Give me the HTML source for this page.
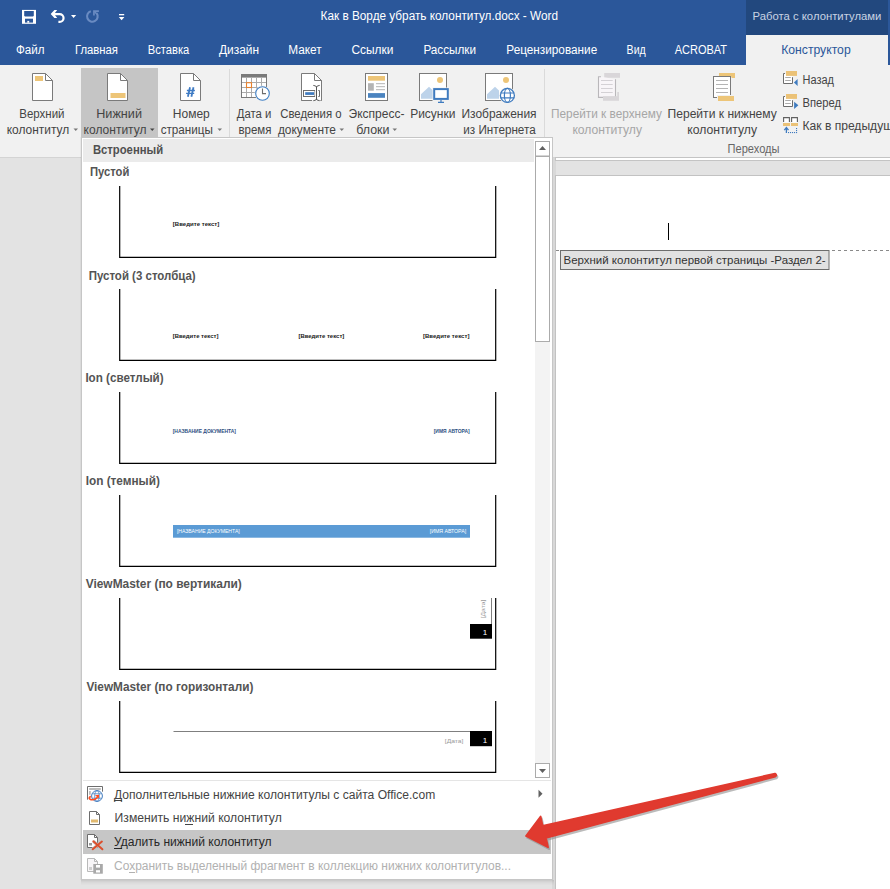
<!DOCTYPE html>
<html><head><meta charset="utf-8">
<style>
html,body{margin:0;padding:0;width:890px;height:889px;overflow:hidden;background:#E3E3E3;}
svg{position:absolute;left:0;top:0;display:block;}
text{font-family:"Liberation Sans",sans-serif;font-size:12px;white-space:pre;}
</style></head>
<body>
<svg width="890" height="889" viewBox="0 0 890 889">
<rect x="0" y="0" width="890" height="65" fill="#2B579A"/>
<rect x="746" y="0" width="142" height="35" fill="#22487E"/>
<rect x="746" y="35" width="142" height="30" fill="#F1F1F1"/>
<rect x="0" y="65" width="890" height="92" fill="#F1F1F1"/>
<rect x="0" y="157" width="890" height="1" fill="#D4D4D4"/>
<rect x="81" y="68" width="77" height="70" fill="#C5C5C5"/>
<rect x="229" y="69" width="1" height="68" fill="#DADADA"/>
<rect x="544" y="69" width="1" height="84" fill="#DADADA"/>
<path d="M73.5 128.5 h4.5 l-2.25 2.5z" fill="#777"/>
<path d="M150 128.5 h4.5 l-2.25 2.5z" fill="#444"/>
<path d="M217.5 128.5 h4.5 l-2.25 2.5z" fill="#777"/>
<path d="M339.5 128.5 h4.5 l-2.25 2.5z" fill="#777"/>
<path d="M392.5 128.5 h4.5 l-2.25 2.5z" fill="#777"/>
<text x="320.60" y="19.70" fill="#FFFFFF" style="font-size:12.00px" textLength="237.39" lengthAdjust="spacingAndGlyphs" >Как в Ворде убрать колонтитул.docx - Word</text>
<text x="752.50" y="20.00" fill="#C9D3E3" style="font-size:11.30px" textLength="128.89" lengthAdjust="spacing" >Работа с колонтитулами</text>
<text x="16.00" y="54.00" fill="#FFFFFF" style="font-size:12.00px" textLength="28.51" lengthAdjust="spacingAndGlyphs" >Файл</text>
<text x="75.00" y="54.00" fill="#FFFFFF" style="font-size:12.00px" textLength="42.99" lengthAdjust="spacingAndGlyphs" >Главная</text>
<text x="147.80" y="54.00" fill="#FFFFFF" style="font-size:12.00px" textLength="41.49" lengthAdjust="spacingAndGlyphs" >Вставка</text>
<text x="219.00" y="54.00" fill="#FFFFFF" style="font-size:12.00px" textLength="39.99" lengthAdjust="spacingAndGlyphs" >Дизайн</text>
<text x="288.30" y="54.00" fill="#FFFFFF" style="font-size:12.00px" textLength="33.40" lengthAdjust="spacingAndGlyphs" >Макет</text>
<text x="351.40" y="54.00" fill="#FFFFFF" style="font-size:12.00px" textLength="41.91" lengthAdjust="spacingAndGlyphs" >Ссылки</text>
<text x="423.40" y="54.00" fill="#FFFFFF" style="font-size:12.00px" textLength="52.61" lengthAdjust="spacingAndGlyphs" >Рассылки</text>
<text x="506.30" y="54.00" fill="#FFFFFF" style="font-size:12.00px" textLength="90.89" lengthAdjust="spacingAndGlyphs" >Рецензирование</text>
<text x="626.60" y="54.00" fill="#FFFFFF" style="font-size:12.00px" textLength="19.09" lengthAdjust="spacingAndGlyphs" >Вид</text>
<text x="674.70" y="54.00" fill="#FFFFFF" style="font-size:12.00px" textLength="52.30" lengthAdjust="spacingAndGlyphs" >ACROBAT</text>
<text x="781.20" y="54.00" fill="#2B579A" style="font-size:12.00px" textLength="69.49" lengthAdjust="spacingAndGlyphs" >Конструктор</text>
<text x="19.30" y="118.00" fill="#444444" style="font-size:12.00px" textLength="45.20" lengthAdjust="spacingAndGlyphs" >Верхний</text>
<text x="6.70" y="134.00" fill="#444444" style="font-size:12.00px" textLength="62.51" lengthAdjust="spacingAndGlyphs" >колонтитул</text>
<text x="96.20" y="118.00" fill="#444444" style="font-size:12.00px" textLength="45.79" lengthAdjust="spacingAndGlyphs" >Нижний</text>
<text x="83.60" y="134.00" fill="#444444" style="font-size:12.00px" textLength="62.91" lengthAdjust="spacingAndGlyphs" >колонтитул</text>
<text x="172.80" y="118.00" fill="#444444" style="font-size:12.00px" textLength="37.01" lengthAdjust="spacingAndGlyphs" >Номер</text>
<text x="160.70" y="134.00" fill="#444444" style="font-size:12.00px" textLength="52.20" lengthAdjust="spacingAndGlyphs" >страницы</text>
<text x="236.80" y="118.00" fill="#444444" style="font-size:12.00px" textLength="34.61" lengthAdjust="spacingAndGlyphs" >Дата и</text>
<text x="238.40" y="134.00" fill="#444444" style="font-size:12.00px" textLength="33.00" lengthAdjust="spacingAndGlyphs" >время</text>
<text x="280.20" y="118.00" fill="#444444" style="font-size:12.00px" textLength="61.40" lengthAdjust="spacingAndGlyphs" >Сведения о</text>
<text x="277.90" y="134.00" fill="#444444" style="font-size:12.00px" textLength="58.11" lengthAdjust="spacingAndGlyphs" >документе</text>
<text x="348.60" y="118.00" fill="#444444" style="font-size:12.00px" textLength="55.89" lengthAdjust="spacingAndGlyphs" >Экспресс-</text>
<text x="356.20" y="134.00" fill="#444444" style="font-size:12.00px" textLength="33.30" lengthAdjust="spacingAndGlyphs" >блоки</text>
<text x="410.20" y="118.00" fill="#444444" style="font-size:12.00px" textLength="45.19" lengthAdjust="spacingAndGlyphs" >Рисунки</text>
<text x="461.50" y="118.00" fill="#444444" style="font-size:12.00px" textLength="75.10" lengthAdjust="spacingAndGlyphs" >Изображения</text>
<text x="463.30" y="134.00" fill="#444444" style="font-size:12.00px" textLength="72.38" lengthAdjust="spacingAndGlyphs" >из Интернета</text>
<text x="551.00" y="118.00" fill="#A6A6A6" style="font-size:12.00px" textLength="110.89" lengthAdjust="spacingAndGlyphs" >Перейти к верхнему</text>
<text x="572.40" y="134.00" fill="#A6A6A6" style="font-size:12.00px" textLength="69.61" lengthAdjust="spacingAndGlyphs" >колонтитулу</text>
<text x="667.50" y="118.00" fill="#444444" style="font-size:12.00px" textLength="109.30" lengthAdjust="spacingAndGlyphs" >Перейти к нижнему</text>
<text x="687.20" y="134.00" fill="#444444" style="font-size:12.00px" textLength="69.81" lengthAdjust="spacingAndGlyphs" >колонтитулу</text>
<text x="727.60" y="152.70" fill="#666666" style="font-size:12.00px" textLength="51.91" lengthAdjust="spacingAndGlyphs" >Переходы</text>
<text x="802.50" y="84.00" fill="#444444" style="font-size:12.00px" textLength="31.40" lengthAdjust="spacingAndGlyphs" >Назад</text>
<text x="802.50" y="107.00" fill="#444444" style="font-size:12.00px" textLength="38.51" lengthAdjust="spacingAndGlyphs" >Вперед</text>
<text x="802.50" y="130.00" fill="#444444" style="font-size:12.00px" textLength="105.51" lengthAdjust="spacingAndGlyphs" >Как в предыдущем</text>
<!-- ===== DOCUMENT AREA ===== -->
<rect x="0" y="158" width="890" height="731" fill="#E3E3E3"/>
<rect x="552" y="158" width="4" height="731" fill="#D8D8D8"/>
<rect x="555.5" y="157.5" width="340" height="3" fill="#FFFFFF" stroke="#C4C4C4" stroke-width="1"/>
<rect x="555.5" y="175.5" width="340" height="720" fill="#FFFFFF" stroke="#C2C2C2" stroke-width="1"/>
<path d="M556 250.5 H890" stroke="#8A8A8A" stroke-width="1" stroke-dasharray="3 3"/>
<rect x="560.5" y="250.5" width="268.5" height="19" fill="#E1E1E1" stroke="#6D6D6D" stroke-width="1"/>
<rect x="668" y="223" width="1" height="17" fill="#000000"/>
<text x="563.50" y="264.00" fill="#333333" style="font-size:11.50px" textLength="262.19" lengthAdjust="spacingAndGlyphs" >Верхний колонтитул первой страницы -Раздел 2-</text>
<!-- ===== QAT icons ===== -->
<rect x="22" y="9.9" width="14" height="13.9" fill="#FFFFFF"/>
<path d="M24.2 11.1 H33.8 V15.8 L33 16.6 H25 L24.2 15.8z" fill="#2B579A"/>
<rect x="25" y="18.7" width="8" height="3.9" fill="#2B579A"/>
<rect x="27.3" y="20.9" width="1.9" height="1.8" fill="#FFFFFF"/>
<path d="M50.7 14 L54.4 10.1 H57.2 L54.2 14 L57.2 17.9 H54.4z" fill="#FFFFFF"/>
<path d="M54 14.05 H59.6 A3.95 3.95 0 0 1 59.6 21.95 H58.4" fill="none" stroke="#FFFFFF" stroke-width="2.2"/>
<path d="M71 15 h5.2 l-2.6 3z" fill="#FFFFFF"/>
<path d="M90.8 11.3 A5.3 5.3 0 1 0 96.6 13.2" fill="none" stroke="#6A8BC2" stroke-width="2.1"/>
<path d="M93.95 15.6 V11.1 H98.9" fill="none" stroke="#6A8BC2" stroke-width="1.7"/>
<path d="M94.2 11.3 L96.8 14" fill="none" stroke="#6A8BC2" stroke-width="1.6"/>
<rect x="119" y="14" width="5.2" height="1.3" fill="#FFFFFF"/>
<path d="M118.8 17 h5.6 l-2.8 3.2z" fill="#FFFFFF"/>

<!-- ===== Ribbon icons ===== -->
<defs>
<path id="pg" d="M32.5 73.5 H45.5 L52.5 80.5 V100.5 H32.5 Z"/>
</defs>
<!-- Верхний -->
<path d="M32.5 73.5 H45.5 L52.5 80.5 V100.5 H32.5 Z" fill="#FFFFFF" stroke="#7A7A7A"/>
<path d="M45.5 73.5 V80.5 H52.5" fill="none" stroke="#7A7A7A"/>
<rect x="35" y="76" width="8" height="5" fill="#EDC578"/>
<!-- Нижний -->
<path d="M107.5 73.5 H120.5 L127.5 80.5 V100.5 H107.5 Z" fill="#FFFFFF" stroke="#7A7A7A"/>
<path d="M120.5 73.5 V80.5 H127.5" fill="none" stroke="#7A7A7A"/>
<rect x="110.5" y="93" width="15" height="5" fill="#EDC578"/>
<!-- Номер -->
<path d="M180.5 73.5 H193.5 L200.5 80.5 V100.5 H180.5 Z" fill="#FFFFFF" stroke="#7A7A7A"/>
<path d="M193.5 73.5 V80.5 H200.5" fill="none" stroke="#7A7A7A"/>
<path d="M190 87.2 L187.9 96.8 M193.5 87.2 L191.4 96.8" stroke="#3F7BC4" stroke-width="1.8"/>
<path d="M186.9 90.5 H194.9 M186.1 93.4 H194.2" stroke="#3F7BC4" stroke-width="1.4"/>
<!-- Дата и время -->
<rect x="241.5" y="74.5" width="25" height="23" fill="#FFFFFF" stroke="#7A7A7A"/>
<rect x="241" y="74" width="26" height="3.6" fill="#7A7A7A"/>
<g stroke="#ABABAB" stroke-width="1">
<path d="M246.5 77.5 V97 M251.5 77.5 V97 M256.5 77.5 V97 M261.5 77.5 V97 M242 82.5 H266 M242 87.5 H266 M242 92.5 H266"/>
</g>
<rect x="246.5" y="82.7" width="5" height="4.8" fill="#FFFFFF" stroke="#E8822E" stroke-width="1.1"/>
<circle cx="262.5" cy="93.5" r="7.4" fill="#FFFFFF" stroke="#F1F1F1" stroke-width="1"/>
<circle cx="262.5" cy="93.5" r="6.8" fill="#FFFFFF" stroke="#3F7FC4" stroke-width="1.1"/>
<path d="M262.5 88.5 V93.6 H266" fill="none" stroke="#6D6D6D" stroke-width="1.1"/>
<!-- Сведения о документе -->
<path d="M301.5 73.5 H314.5 L321.5 80.5 V100.5 H301.5 Z" fill="#FFFFFF" stroke="#7A7A7A"/>
<path d="M314.5 73.5 V80.5 H321.5" fill="none" stroke="#7A7A7A"/>
<rect x="303.5" y="90.5" width="11.5" height="6" fill="#FFFFFF" stroke="#6D6D6D"/>
<rect x="305.2" y="92.2" width="8.8" height="2.7" fill="#3F7BBF"/>
<rect x="315.2" y="84" width="2.6" height="18" fill="#FFFFFF"/>
<rect x="311.8" y="99.8" width="8.6" height="2.5" fill="#F1F1F1"/>
<rect x="311.8" y="99.5" width="8.6" height="0.6" fill="#FFFFFF"/>
<path d="M311.8 100.5 H301.5" stroke="#7A7A7A"/>
<path d="M316.5 86.5 V99.8" stroke="#555555" stroke-width="1"/>
<path d="M313.3 85.4 Q316.5 85.6 316.5 87.3 Q316.5 85.6 319.7 85.4" fill="none" stroke="#555555" stroke-width="0.95"/>
<path d="M313.3 100.7 Q316.5 100.5 316.5 98.8 Q316.5 100.5 319.7 100.7" fill="none" stroke="#555555" stroke-width="0.95"/>
<path d="M318.3 90.5 H319.5 V96.5 H318.3" fill="none" stroke="#6D6D6D"/>
<path d="M321.5 80.5 V100.5" stroke="#7A7A7A"/>
<!-- Экспресс-блоки -->
<rect x="365.5" y="73.5" width="22" height="27" fill="#FFFFFF" stroke="#7A7A7A"/>
<rect x="368" y="76" width="17" height="4.7" fill="#EDC578"/>
<rect x="368" y="83.2" width="5.8" height="7.5" fill="#B4B4B4"/>
<path d="M376 83.7 H385 M376 86.7 H385 M376 89.7 H385" stroke="#ABABAB" stroke-width="0.9"/>
<rect x="368" y="93.1" width="17" height="4.7" fill="#4A83BF"/>
<!-- Рисунки -->
<rect x="419.5" y="73.5" width="27" height="27" fill="#FFFFFF" stroke="#7A7A7A"/>
<circle cx="440" cy="80" r="3" fill="#EDC578"/>
<path d="M421 98.8 V94.2 L429 86.8 L433 90.4 V98.8z" fill="#BDD3EA"/>
<rect x="432.5" y="87.5" width="17" height="16" fill="#F1F1F1"/>
<rect x="434.2" y="89.1" width="13.6" height="9.8" fill="#FFFFFF" stroke="#3F7BBF" stroke-width="2"/>
<path d="M438 102.3 h6 M441 100 v2" stroke="#3F7BBF" stroke-width="1.2"/>
<!-- Изображения из Интернета -->
<rect x="485.5" y="73.5" width="27" height="27" fill="#FFFFFF" stroke="#7A7A7A"/>
<circle cx="506" cy="80" r="3" fill="#EDC578"/>
<path d="M487 98.8 V94.2 L495 86.8 L499 90.4 V98.8z" fill="#BDD3EA"/>
<circle cx="507.4" cy="95.4" r="8.2" fill="#F1F1F1"/>
<circle cx="507.4" cy="95.4" r="7" fill="#FFFFFF" stroke="#3F7BBF" stroke-width="1.3"/>
<ellipse cx="507.4" cy="95.4" rx="3" ry="7" fill="none" stroke="#3F7BBF" stroke-width="1.2"/>
<path d="M500.5 93 H514.3 M500.5 97.8 H514.3" stroke="#3F7BBF" stroke-width="1.2"/>
<!-- Перейти к верхнему (disabled) -->
<rect x="604.2" y="73" width="15.8" height="4.8" fill="#D9D6D9"/>
<path d="M601 76.8 H598.5 V97.4 H615.5 V79.2" fill="#F8F5F8" stroke="#B9B7BA" stroke-width="1.1"/>
<path d="M601 80.5 H612.7 M601 84.5 H612.7 M601 88.5 H612.7 M601 92.5 H612.7" stroke="#CFCDD0" stroke-width="0.9"/>
<rect x="603" y="96.2" width="16" height="4.6" fill="#D9D6D9"/>
<rect x="617.5" y="96" width="1.5" height="-0" fill="#D9D6D9"/>
<rect x="617.2" y="92" width="1.8" height="5" fill="#D9D6D9"/>
<!-- Перейти к нижнему -->
<rect x="719" y="73" width="16" height="3.8" fill="#EDC578"/>
<rect x="731.5" y="73" width="3.5" height="5" fill="#EDC578"/>
<rect x="713.5" y="76.5" width="17" height="21" fill="#FFFFFF" stroke="#7A7A7A"/>
<path d="M716 80.5 H728 M716 84.5 H728 M716 88.5 H728 M716 92.5 H728" stroke="#ABABAB" stroke-width="0.9"/>
<rect x="717" y="95" width="18" height="7" fill="#F1F1F1"/>
<rect x="718" y="96" width="16" height="5" fill="#EDC578"/>
<!-- Назад -->
<rect x="784" y="74" width="8.5" height="9.5" fill="#FFFFFF"/>
<path d="M785 73.5 H783.5 V83.5 H792.5 V77.2" fill="none" stroke="#6D6D6D"/>
<path d="M785.2 77.5 H790.8 M785.2 80.5 H790.8" stroke="#ABABAB" stroke-width="1"/>
<rect x="786" y="71" width="11" height="4.9" fill="#EBC277"/>
<path d="M797.6 79 V85.9 L793.9 82.5z" fill="#3F7BBF"/>
<!-- Вперед -->
<rect x="784" y="97" width="8.5" height="9.5" fill="#FFFFFF"/>
<path d="M785 96.5 H783.5 V106.5 H792.5 V100.2" fill="none" stroke="#6D6D6D"/>
<path d="M785.2 100.5 H790.8 M785.2 103.5 H790.8" stroke="#ABABAB" stroke-width="1"/>
<rect x="786" y="94" width="11" height="4.9" fill="#EBC277"/>
<path d="M794.1 101.8 V108.9 L798.4 105.3z" fill="#3F7BBF"/>
<!-- Как в предыдущем -->
<rect x="783.5" y="117.5" width="6" height="5" fill="#FFFFFF"/>
<rect x="791.5" y="117.5" width="6" height="5" fill="#FFFFFF"/>
<path d="M783.6 122 V117.6 H789.4 V122 M791.6 122 V117.6 H797.4 V122" fill="none" stroke="#606060" stroke-width="1.1"/>
<rect x="783" y="123" width="7" height="3" fill="#EBC277"/>
<rect x="791" y="123" width="7" height="3" fill="#EBC277"/>
<path d="M786.4 133 V127.8 M784.3 130.1 L786.4 127.6 L788.5 130.1" fill="none" stroke="#3F7BBF" stroke-width="1.3"/>
<g fill="#3F7BBF"><rect x="788" y="132" width="1.1" height="1.1"/><rect x="790" y="132" width="1.1" height="1.1"/><rect x="792" y="132" width="1.1" height="1.1"/><rect x="794" y="132" width="1.1" height="1.1"/><rect x="796" y="132" width="1.1" height="1.1"/><rect x="796" y="130" width="1.1" height="1.1"/><rect x="796" y="128" width="1.1" height="1.1"/></g>
<!-- ===== MENU ===== -->
<rect x="80" y="137" width="1" height="743" fill="#000000" opacity="0.04"/>
<rect x="81" y="880" width="473" height="1" fill="#000000" opacity="0.10"/>
<rect x="81" y="881" width="473" height="1" fill="#000000" opacity="0.07"/>
<rect x="81" y="882" width="473" height="1" fill="#000000" opacity="0.045"/>
<rect x="81" y="883" width="473" height="1" fill="#000000" opacity="0.025"/>
<rect x="81" y="884" width="473" height="1" fill="#000000" opacity="0.01"/>
<rect x="81.5" y="137.5" width="471" height="742" fill="#FFFFFF" stroke="#C6C6C6" stroke-width="1"/>
<rect x="83" y="139" width="451" height="23" fill="#EBEBEB"/>
<!-- scrollbar -->
<rect x="535" y="141" width="15" height="637" fill="#F3F3F3"/>
<rect x="535.5" y="141.5" width="14" height="200" fill="#FFFFFF" stroke="#ABABAB" stroke-width="1"/>
<rect x="535.5" y="155.5" width="14" height="1.5" fill="#ABABAB"/>
<path d="M539 150 H546 L542.5 146z" fill="#606060"/>
<rect x="535.5" y="763.5" width="14" height="14" fill="#FFFFFF" stroke="#ABABAB" stroke-width="1"/>
<path d="M539 769 H546 L542.5 773z" fill="#606060"/>
<!-- gallery items -->
<path d="M119.7 186 V257.4 H495.7 V186" fill="none" stroke="#000" stroke-width="1.2"/>

<path d="M119.7 289 V360.4 H495.7 V289" fill="none" stroke="#000" stroke-width="1.2"/>

<path d="M119.7 392 V463.4 H495.7 V392" fill="none" stroke="#000" stroke-width="1.2"/>

<path d="M119.7 495 V566.4 H495.7 V495" fill="none" stroke="#000" stroke-width="1.2"/>
<rect x="173" y="525" width="297" height="12.7" fill="#5B9BD5"/>

<path d="M119.7 598 V669.4 H495.7 V598" fill="none" stroke="#000" stroke-width="1.2"/>
<rect x="491" y="598" width="1" height="26" fill="#7F7F7F"/>
<rect x="470" y="624" width="22" height="14.7" fill="#000"/>

<path d="M119.7 701 V772.4 H495.7 V701" fill="none" stroke="#000" stroke-width="1.2"/>
<rect x="173.5" y="731" width="297" height="1" fill="#7F7F7F"/>
<rect x="470" y="731" width="22" height="15.2" fill="#000"/>

<!-- separator & commands -->
<rect x="83" y="780" width="468" height="1" fill="#E5E5E5"/>
<rect x="83" y="830" width="468" height="24" fill="#C6C6C6"/>
<path d="M538.5 789.7 V797.7 L542.5 793.7z" fill="#606060"/>
<rect x="114" y="800" width="8" height="1" fill="#444"/>
<rect x="185" y="824" width="8" height="1" fill="#444"/>
<rect x="114" y="848" width="8" height="1" fill="#262626"/>
<rect x="129" y="872" width="6" height="1" fill="#B1B1B1"/>
<!-- menu icons -->
<path d="M87.5 799.7 V786.5 H102.5 V791.7" fill="none" stroke="#6D6D6D" stroke-width="1"/>
<rect x="89.2" y="788.2" width="11.6" height="1.6" fill="#ABABAB"/>
<rect x="89.2" y="791" width="1.4" height="3.8" fill="#ABABAB"/>
<circle cx="97" cy="796" r="6.3" fill="#FFFFFF"/>
<circle cx="97" cy="796" r="5.4" fill="#FFFFFF" stroke="#3F7BBF" stroke-width="1"/>
<ellipse cx="97" cy="796" rx="2.3" ry="5.4" fill="none" stroke="#3F7BBF" stroke-width="0.75"/>
<path d="M92.5 793.8 H101.5 M92.5 798.2 H101.5" stroke="#3F7BBF" stroke-width="0.75"/>
<path d="M90.7 796.3 Q87.6 798.6 91 799.6 Q94.8 800.4 97.6 797.2" fill="none" stroke="#FF4A1C" stroke-width="1.7"/>
<path d="M95 795.3 L99 794.8 L98.9 798.6z" fill="#FF4A1C"/>

<path d="M89.5 811.5 H96.5 L99.5 814.5 V824.5 H89.5z" fill="#FFFFFF" stroke="#6D6D6D"/>
<path d="M96.5 811.5 V814.5 H99.5" fill="none" stroke="#6D6D6D"/>
<rect x="91" y="819.5" width="7" height="3" fill="#E1B96F"/>

<path d="M87.5 834.5 H94.5 L97.5 837.5 V847.5 H87.5z" fill="#FFFFFF" stroke="#6D6D6D"/>
<path d="M94.5 834.5 V837.5 H97.5" fill="none" stroke="#6D6D6D"/>
<rect x="89" y="843" width="3" height="2.5" fill="#9A9A9A"/>
<path d="M93.3 841.3 L102.4 849.3 M101.9 841.6 L92.7 849.2" stroke="#C6C6C6" stroke-width="3.2"/>
<path d="M93.3 841.3 L102.4 849.3 M101.9 841.6 L92.7 849.2" stroke="#DC4F2C" stroke-width="2" stroke-linecap="round"/>

<path d="M87.5 858.5 H94.5 L97.5 861.5 V871.5 H87.5z" fill="#F8F6F8" stroke="#B9B9B9"/>
<path d="M94.5 858.5 V861.5 H97.5" fill="none" stroke="#B9B9B9"/>
<rect x="89" y="867" width="3" height="3" fill="#CFCFCF"/>
<rect x="93.3" y="864" width="9.5" height="9.7" fill="#A9A9A9"/>
<rect x="96" y="865" width="4" height="2.6" fill="#FFFFFF"/>
<rect x="96" y="870.2" width="4" height="2.3" fill="#FFFFFF"/>

<text x="92.90" y="154.30" fill="#505050" style="font-size:12.00px;font-weight:bold" textLength="70.20" lengthAdjust="spacingAndGlyphs" >Встроенный</text>
<text x="89.90" y="175.90" fill="#545454" style="font-size:12.00px;font-weight:bold" textLength="39.41" lengthAdjust="spacingAndGlyphs" >Пустой</text>
<text x="88.70" y="279.60" fill="#545454" style="font-size:12.00px;font-weight:bold" textLength="107.01" lengthAdjust="spacingAndGlyphs" >Пустой (3 столбца)</text>
<text x="85.40" y="382.40" fill="#545454" style="font-size:12.00px;font-weight:bold" textLength="78.20" lengthAdjust="spacingAndGlyphs" >Ion (светлый)</text>
<text x="85.70" y="485.30" fill="#545454" style="font-size:12.00px;font-weight:bold" textLength="74.19" lengthAdjust="spacingAndGlyphs" >Ion (темный)</text>
<text x="85.70" y="588.20" fill="#545454" style="font-size:12.00px;font-weight:bold" textLength="156.10" lengthAdjust="spacingAndGlyphs" >ViewMaster (по вертикали)</text>
<text x="86.40" y="691.20" fill="#545454" style="font-size:12.00px;font-weight:bold" textLength="166.99" lengthAdjust="spacingAndGlyphs" >ViewMaster (по горизонтали)</text>
<text x="172.80" y="225.80" fill="#1A1A1A" style="font-size:5.70px;font-weight:bold" textLength="46.51" lengthAdjust="spacingAndGlyphs" >[Введите текст]</text>
<text x="172.70" y="337.50" fill="#1A1A1A" style="font-size:5.70px;font-weight:bold" textLength="45.71" lengthAdjust="spacingAndGlyphs" >[Введите текст]</text>
<text x="298.40" y="337.50" fill="#1A1A1A" style="font-size:5.70px;font-weight:bold" textLength="45.91" lengthAdjust="spacingAndGlyphs" >[Введите текст]</text>
<text x="423.00" y="337.50" fill="#1A1A1A" style="font-size:5.70px;font-weight:bold" textLength="46.41" lengthAdjust="spacingAndGlyphs" >[Введите текст]</text>
<text x="172.70" y="432.60" fill="#2E4F7F" style="font-size:5.30px;font-weight:bold" textLength="63.30" lengthAdjust="spacingAndGlyphs" >[НАЗВАНИЕ ДОКУМЕНТА]</text>
<text x="433.70" y="432.60" fill="#2E4F7F" style="font-size:5.30px;font-weight:bold" textLength="36.00" lengthAdjust="spacingAndGlyphs" >[ИМЯ АВТОРА]</text>
<text x="176.90" y="533.00" fill="#FFFFFF" style="font-size:5.30px" textLength="62.90" lengthAdjust="spacingAndGlyphs" >[НАЗВАНИЕ ДОКУМЕНТА]</text>
<text x="429.70" y="533.00" fill="#FFFFFF" style="font-size:5.30px" textLength="36.40" lengthAdjust="spacingAndGlyphs" >[ИМЯ АВТОРА]</text>
<text x="482.80" y="635.00" fill="#FFFFFF" style="font-size:8.00px" textLength="4.21" lengthAdjust="spacing" >1</text>
<text x="482.80" y="743.00" fill="#FFFFFF" style="font-size:8.00px" textLength="4.21" lengthAdjust="spacing" >1</text>
<text x="444.80" y="742.80" fill="#9A9A9A" style="font-size:6.00px" textLength="18.60" lengthAdjust="spacingAndGlyphs" >[Дата]</text>
<g transform="translate(485.3,618.3) rotate(-90)"><text x="0.00" y="0.00" fill="#9A9A9A" style="font-size:6.00px" textLength="18.60" lengthAdjust="spacingAndGlyphs" >[Дата]</text>
</g>
<text x="114.00" y="798.50" fill="#444444" style="font-size:12.00px" textLength="321.21" lengthAdjust="spacingAndGlyphs" >Дополнительные нижние колонтитулы с сайта Office.com</text>
<text x="114.60" y="822.20" fill="#444444" style="font-size:12.00px" textLength="167.19" lengthAdjust="spacingAndGlyphs" >Изменить нижний колонтитул</text>
<text x="114.00" y="846.20" fill="#262626" style="font-size:12.00px" textLength="157.49" lengthAdjust="spacingAndGlyphs" >Удалить нижний колонтитул</text>
<text x="114.00" y="870.20" fill="#B1B1B1" style="font-size:12.00px" textLength="397.01" lengthAdjust="spacingAndGlyphs" >Сохранить выделенный фрагмент в коллекцию нижних колонтитулов...</text>
<!-- ===== RED ARROW ===== -->
<defs><filter id="sh" x="-10%" y="-10%" width="120%" height="130%"><feGaussianBlur stdDeviation="0.7"/></filter></defs>
<path transform="translate(1.2,1.8)" filter="url(#sh)" d="M526 836 L540.6 816.5 L542.6 825.8 L775 773.6 Q777.5 775 775.3 776.6 L546 838 L548 847.3 Z" fill="#8E8E8E" opacity="0.6" stroke="#8E8E8E" stroke-width="1.8" stroke-linejoin="round"/>
<path d="M526 836 L540.6 816.5 L542.6 825.8 L775 773.6 Q777.5 775 775.3 776.6 L546 838 L548 847.3 Z" fill="#E03A2F" stroke="#E03A2F" stroke-width="1.8" stroke-linejoin="round"/>
</svg>
</body></html>
